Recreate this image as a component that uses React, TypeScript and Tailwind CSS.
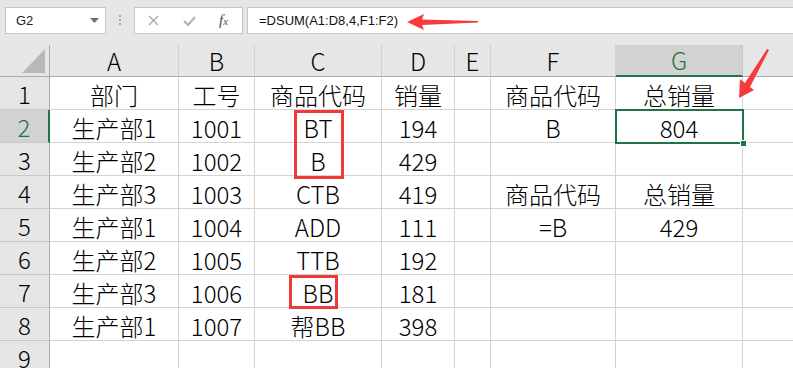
import React from 'react';

const colWidths = ['w-[50px]', 'w-[129px]', 'w-[76px]', 'w-[127px]', 'w-[73px]', 'w-[36px]', 'w-[125px]', 'w-[127px]', 'w-[200px]'];
const letters = ['A', 'B', 'C', 'D', 'E', 'F', 'G', 'H'];

const rows: string[][] = [
  ['部门', '工号', '商品代码', '销量', '', '商品代码', '总销量', ''],
  ['生产部1', '1001', 'BT', '194', '', 'B', '804', ''],
  ['生产部2', '1002', 'B', '429', '', '', '', ''],
  ['生产部3', '1003', 'CTB', '419', '', '商品代码', '总销量', ''],
  ['生产部1', '1004', 'ADD', '111', '', '=B', '429', ''],
  ['生产部2', '1005', 'TTB', '192', '', '', '', ''],
  ['生产部3', '1006', 'BB', '181', '', '', '', ''],
  ['生产部1', '1007', '帮BB', '398', '', '', '', ''],
  ['', '', '', '', '', '', '', ''],
];

const FormulaBar: React.FC = () => (
  <div className="flex h-[45px] items-start bg-[#e6e6e6] pt-[7px]">
    {/* Name box */}
    <div className="ml-[5px] flex h-[27px] w-[101px] shrink-0 items-center justify-between border border-[#c6c6c6] bg-white pl-[10px] pr-[6px] font-['Liberation_Sans',sans-serif] text-[13px] text-[#222]">
      <span>G2</span>
      <svg width="9" height="5" viewBox="0 0 9 5">
        <path d="M0 0 L9 0 L4.5 5 Z" fill="#707070" />
      </svg>
    </div>
    <div className="ml-[13px] mt-[8px] flex flex-col gap-[2px]">
      <span className="block h-[2px] w-[2px] bg-[#a8a8a8]" />
      <span className="block h-[2px] w-[2px] bg-[#a8a8a8]" />
      <span className="block h-[2px] w-[2px] bg-[#a8a8a8]" />
    </div>
    {/* Cancel / enter / fx */}
    <div className="ml-[13px] flex h-[27px] w-[109px] shrink-0 items-center border border-[#c6c6c6] bg-white">
      <svg className="ml-[13px]" width="11" height="11" viewBox="0 0 11 11">
        <path d="M1 1 L10 10 M10 1 L1 10" stroke="#a6a6a6" strokeWidth="1.3" />
      </svg>
      <svg className="ml-[24px]" width="13" height="10" viewBox="0 0 13 10">
        <path d="M1 5 L5 9 L12 1" stroke="#b4b4b4" strokeWidth="2.2" fill="none" />
      </svg>
      <span className="ml-[23px] font-['Liberation_Serif',serif] text-[15px] italic leading-none text-[#4a4a4a]">
        f<span className="text-[11px]">x</span>
      </span>
    </div>
    {/* Formula input */}
    <div className="ml-[4px] flex h-[27px] flex-1 items-center border border-r-0 border-[#c6c6c6] bg-white pl-[11px] font-['Liberation_Sans',sans-serif] text-[13px] text-[#111]">
      =DSUM(A1:D8,4,F1:F2)
    </div>
  </div>
);

const App: React.FC = () => {
  return (
    <div className="relative h-[368px] w-[793px] overflow-hidden bg-white font-['Noto_Sans_CJK_SC',sans-serif] font-light">
      <FormulaBar />

      {/* Column headers */}
      <div className="flex h-[32px]">
        <div className={`${colWidths[0]} relative shrink-0 border-r border-b border-[#ababab] bg-[#e6e6e6]`}>
          <svg className="absolute right-[4px] bottom-[3px]" width="23" height="24" viewBox="0 0 23 24">
            <path d="M23 0 L23 24 L0 24 Z" fill="#b8b8b8" />
          </svg>
        </div>
        {letters.map((l, i) => {
          const active = l === 'G';
          return (
            <div
              key={l}
              className={`${colWidths[i + 1]} flex shrink-0 items-center justify-center text-[24px] leading-none ${
                active
                  ? 'border-r border-r-[#c6c6c6] border-b-2 border-b-[#217346] bg-[#d2d2d2] text-[#217346]'
                  : 'border-r border-r-[#d0d0d0] border-b border-b-[#ababab] bg-[#e6e6e6] text-black'
              }`}
            >
              {l}
            </div>
          );
        })}
      </div>

      {/* Rows */}
      {rows.map((row, r) => {
        const rowNo = r + 1;
        const activeRow = rowNo === 2;
        return (
          <div key={rowNo} className="flex h-[33px]">
            <div
              className={`${colWidths[0]} flex shrink-0 items-center justify-center border-b border-b-[#c8c8c8] pt-[2px] text-[24px] leading-none ${
                activeRow
                  ? 'border-r-2 border-r-[#217346] bg-[#d2d2d2] text-[#217346]'
                  : 'border-r border-r-[#ababab] bg-[#e6e6e6] text-black'
              }`}
            >
              {rowNo}
            </div>
            {row.map((v, c) => (
              <div
                key={c}
                className={`${colWidths[c + 1]} relative flex shrink-0 items-center justify-center border-r border-b border-[#d4d4d4] pt-[3px] text-[24px] leading-none text-black`}
              >
                {v}
              </div>
            ))}
          </div>
        );
      })}

      {/* Active cell G2 */}
      <div className="absolute top-[109px] left-[615px] h-[35px] w-[129px] border-2 border-[#217346]" />
      <div className="absolute top-[140px] left-[740px] h-[7px] w-[7px] border border-white bg-[#217346]" />

      {/* Annotations */}
      <div className="absolute top-[110px] left-[294px] h-[69px] w-[50px] border-[3px] border-[#f03a3a]" />
      <div className="absolute top-[275px] left-[289px] h-[34px] w-[49px] border-[3px] border-[#f03a3a]" />
      <svg className="pointer-events-none absolute top-0 left-0" width="793" height="368" viewBox="0 0 793 368">
        <path d="M407 22 L424 14 L422 19.5 L478 21 L478 22.5 L422 25 L424 30 Z" fill="#f53b3b" />
        <path d="M739 98 L740 79 L745 83 L767 49 L769 50 L750 87 L754 90 Z" fill="#f53b3b" />
      </svg>
    </div>
  );
};

export default App;
